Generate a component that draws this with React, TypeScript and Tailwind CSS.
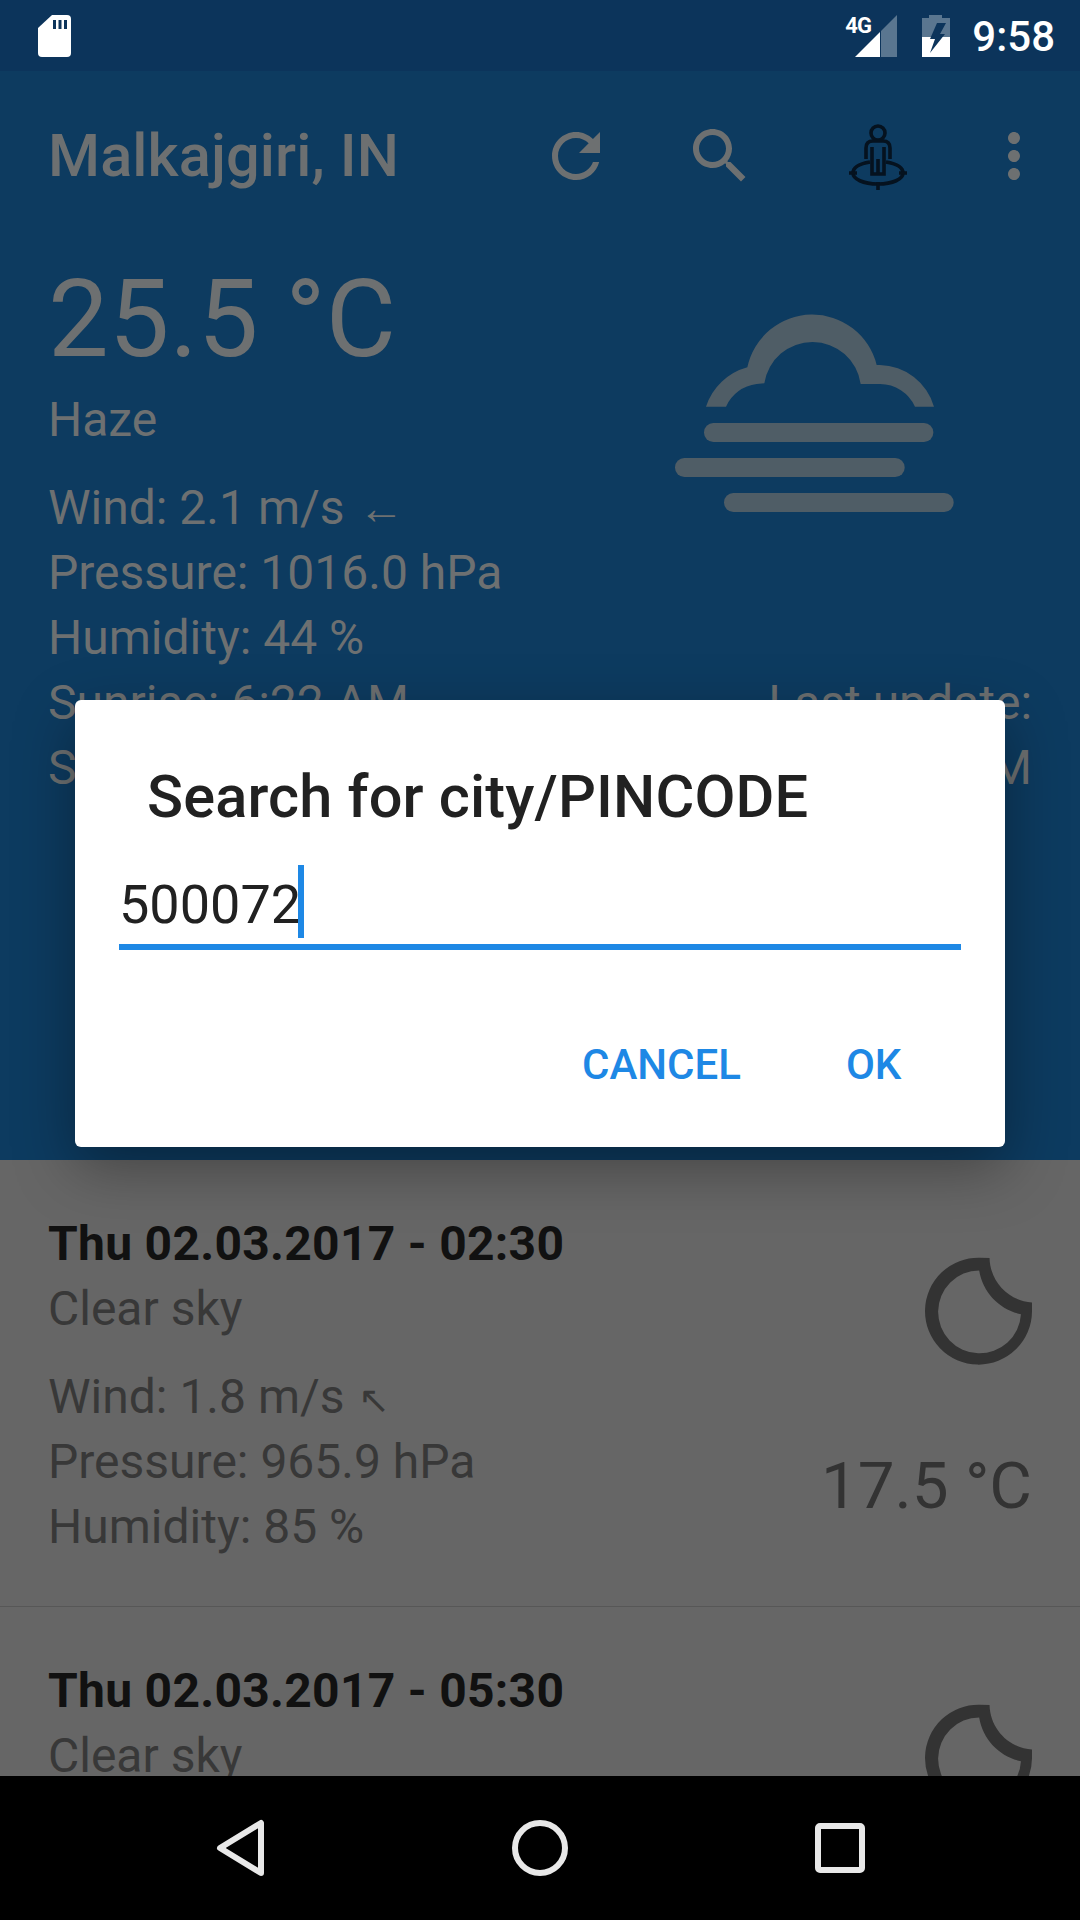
const forecast = [
  { time: 'Thu 02.03.2017 - 02:30', wind: '1.8 m/s', arrow: '↖', pressure: '965.9 hPa', humidity: '85 %', temp: '17.5 °C' },
  { time: 'Thu 02.03.2017 - 05:30', wind: '1.6 m/s', arrow: '↖', pressure: '966.2 hPa', humidity: '84 %', temp: '16.9 °C' },
];

function StatusBar() {
  return (
    <div className="relative flex h-[71px] shrink-0 items-start bg-[#0c345b]">
      <svg className="ml-[38px] mt-[15px]" width="33" height="42" viewBox="0 0 33 42">
        <path d="M14 0H29Q33 0 33 4V38Q33 42 29 42H4Q0 42 0 38V13Z" fill="#fff" />
        <path d="M15 5h3v9h-3zM20.500 5h3v9h-3zM26 5h3v9h-3z" fill="#0c345b" />
      </svg>
      <div className="ml-auto mr-[25px] mt-[15px] flex items-start">
        <div className="relative h-[42px] w-[53px]">
          <svg className="absolute left-[11px] top-0" width="42" height="42" viewBox="0 0 42 42">
            <path d="M0 42L25 17V42Z" fill="#fff" />
            <path d="M26 16L42 0V42H26Z" fill="#5a7690" />
          </svg>
          <span className="absolute left-[1px] top-[-1px] text-[22px] font-bold leading-[24px] tracking-[-1px] text-white">4G</span>
        </div>
        <svg className="ml-[25px]" width="28" height="42" viewBox="0 0 28 42">
          <path d="M7 0H20V3H28V22H0V3H7Z" fill="#5a7690" />
          <path d="M0 22H28V42H0Z" fill="#fff" />
          <path d="M15 8H24L18 19H23L8 38L13 24H8Z" fill="#0c345b" />
        </svg>
        <span className="ml-[22px] mt-[-2px] text-[42px] font-medium leading-[48px] text-white">9:58</span>
      </div>
    </div>
  );
}

function PersonIcon() {
  return (
    <svg width="72" height="72" viewBox="0 0 72 72" fill="none" stroke="#05121f" strokeWidth="3.600">
      <circle cx="36" cy="12" r="7" />
      <path d="M24 38V27Q24 20 31 20H41Q48 20 48 27V38M30 26V53H42V26M36 38V52" />
      <path d="M28 41C16 43 11 47 11 52C11 58 21 63 36 63C51 63 61 58 61 52C61 47 56 43 44 41" />
      <path d="M7 52H15M57 52H65M36 61V69" />
    </svg>
  );
}

function AppBar() {
  return (
    <div className="flex h-[121px] items-start pt-[49px]">
      <span className="ml-[48px] mt-[2px] w-[492px] text-[59.500px] font-medium leading-[68px] tracking-[0.1px] text-[#6d7071]">Malkajgiri, IN</span>
      <svg width="72" height="72" viewBox="0 0 24 24" fill="#6d7071">
        <path d="M17.650 6.350C16.200 4.900 14.210 4 12 4c-4.420 0-7.990 3.580-7.990 8s3.570 8 7.990 8c3.730 0 6.840-2.550 7.730-6h-2.080c-.82 2.330-3.040 4-5.650 4-3.310 0-6-2.690-6-6s2.690-6 6-6c1.660 0 3.140.69 4.220 1.780L13 11h7V4l-2.350 2.350z" />
      </svg>
      <svg className="ml-[72px]" width="72" height="72" viewBox="0 0 24 24" fill="#6d7071">
        <path d="M15.500 14h-.79l-.28-.27C15.410 12.590 16 11.110 16 9.500 16 5.910 13.090 3 9.500 3S3 5.910 3 9.500 5.910 16 9.500 16c1.610 0 3.090-.59 4.230-1.570l.27.28v.79l5 4.990L20.490 19l-4.990-5zm-6 0C7.010 14 5 11.990 5 9.500S7.010 5 9.500 5 14 7.010 14 9.500 11.990 14 9.500 14z" />
      </svg>
      <div className="ml-[86px] mt-[1px]">
        <PersonIcon />
      </div>
      <svg className="ml-[64px]" width="72" height="72" viewBox="0 0 24 24" fill="#6d7071">
        <path d="M12 8c1.100 0 2-.9 2-2s-.9-2-2-2-2 .9-2 2 .9 2 2 2zm0 2c-1.100 0-2 .9-2 2s.9 2 2 2 2-.9 2-2-.9-2-2-2zm0 6c-1.100 0-2 .9-2 2s.9 2 2 2 2-.9 2-2-.9-2-2-2z" />
      </svg>
    </div>
  );
}

function FogIcon() {
  return (
    <svg width="340" height="260" viewBox="0 0 1020 780" fill="#4f5d66">
      <path d="M198 380A180 180 0 0 1 322 262A199 199 0 0 1 710 255H720A172 172 0 0 1 882 380H825A115 115 0 0 0 720 312H662A146 146 0 0 0 373 310L350 312A115 115 0 0 0 258 380Z" />
      <rect x="192" y="429" width="688" height="57" rx="28" />
      <rect x="105" y="534" width="689" height="57" rx="28" />
      <rect x="252" y="639" width="689" height="57" rx="28" />
    </svg>
  );
}

function Current() {
  return (
    <div className="h-[968px] pl-[48px] pr-[48px] text-[#6d7071]">
      <div className="flex items-start justify-between">
        <div>
          <div className="mt-[67px] text-[108px] leading-[120px]">25.5 °C</div>
          <div className="mt-[11px] text-[48px] leading-[60px]">Haze</div>
          <div className="mt-[25px] text-[48px] leading-[65px]">
            <div>Wind: 2.1 m/s <span className="ml-[2px] text-[46px] leading-none">←</span></div>
            <div>Pressure: 1016.0 hPa</div>
            <div>Humidity: 44 %</div>
            <div>Sunrise: 6:22 AM</div>
            <div>Sunset: 6:19 PM</div>
          </div>
        </div>
        <div className="mr-[52px] mt-[88px]">
          <FogIcon />
        </div>
      </div>
      <div className="ml-auto mt-[-130px] w-fit text-right text-[48px] leading-[65px]">
        <div>Last update:</div>
        <div>9:58 AM</div>
      </div>
    </div>
  );
}

function MoonIcon() {
  return (
    <svg width="117" height="117" viewBox="420 100 350 350" fill="#333" fillRule="evenodd">
      <path d="M628 115L600 114A160 160 0 1 0 755 275V248C690 245 630 190 628 115ZM597 152A124 124 0 1 0 722 283C660 270 608 220 597 152Z" />
    </svg>
  );
}

function ForecastRow({ row }: { row: (typeof forecast)[number] }) {
  return (
    <div className="flex h-[447px] shrink-0 justify-between border-b-[1px] border-[#575757] pl-[48px] pr-[48px] pt-[54px]">
      <div>
        <div className="text-[48px] font-bold leading-[60px] tracking-[0.28px] text-[#111]">{row.time}</div>
        <div className="mt-[5px] text-[48px] leading-[60px] text-[#383838]">Clear sky</div>
        <div className="mt-[25px] text-[48px] leading-[65px] text-[#383838]">
          <div>Wind: {row.wind} <span className="ml-[2px] text-[38px] leading-none">{row.arrow}</span></div>
          <div>Pressure: {row.pressure}</div>
          <div>Humidity: {row.humidity}</div>
        </div>
      </div>
      <div className="flex flex-col items-end">
        <div className="mr-[-5px] mt-[39px]">
          <MoonIcon />
        </div>
        <div className="mt-[78px] text-[65.500px] leading-[76px] text-[#333]">{row.temp}</div>
      </div>
    </div>
  );
}

function NavBar() {
  return (
    <div className="flex h-[144px] shrink-0 items-center bg-black">
      <svg className="ml-[214px]" width="52" height="60" viewBox="0 0 52 60" fill="none" stroke="#e8e8e8" strokeWidth="6" strokeLinejoin="round">
        <path d="M47 5V55L6 30Z" />
      </svg>
      <svg className="ml-[244px]" width="60" height="60" viewBox="0 0 60 60" fill="none" stroke="#e8e8e8" strokeWidth="6">
        <circle cx="30" cy="30" r="25" />
      </svg>
      <svg className="ml-[242px]" width="56" height="56" viewBox="0 0 56 56" fill="none" stroke="#e8e8e8" strokeWidth="6" strokeLinejoin="round">
        <rect x="6" y="6" width="44" height="44" rx="2" />
      </svg>
    </div>
  );
}

function SearchDialog() {
  return (
    <div className="absolute left-[75px] top-[700px] flex h-[447px] w-[930px] flex-col rounded-[6px] bg-white shadow-[0_20px_60px_rgba(0,0,0,0.35)]">
      <div className="ml-[72px] mt-[62px] text-[59.500px] font-medium leading-[70px] tracking-[0.16px] text-[#212121]">Search for city/PINCODE</div>
      <div className="relative ml-[44px] mt-[33px] h-[85px] w-[842px] border-b-[6px] border-[#1e88e5]">
        <span className="text-[54px] leading-[80px] text-[#212121]">500072</span>
        <span className="absolute left-[179px] top-0 h-[73px] w-[6px] bg-[#1e88e5]" />
      </div>
      <div className="ml-[507px] mt-[90px] flex text-[42px] font-medium leading-[50px] text-[#1e88e5]">
        <span>CANCEL</span>
        <span className="ml-[105px]">OK</span>
      </div>
    </div>
  );
}

export default function App() {
  return (
    <div className="relative flex h-[1920px] w-[1080px] flex-col overflow-hidden bg-[#666] [font-family:Roboto,sans-serif]">
      <StatusBar />
      <div className="h-[1089px] shrink-0 bg-[#0d3b60]">
        <AppBar />
        <Current />
      </div>
      <div className="flex min-h-0 flex-1 flex-col overflow-hidden">
        {forecast.map((row) => (
          <ForecastRow key={row.time} row={row} />
        ))}
      </div>
      <NavBar />
      <SearchDialog />
    </div>
  );
}
